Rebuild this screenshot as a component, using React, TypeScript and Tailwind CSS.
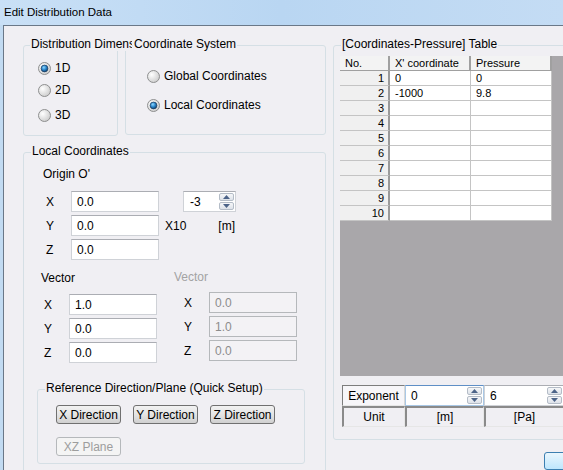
import React, { useId } from "react";

function Radio({ checked }: { checked?: boolean }) {
  const id = useId().replace(/:/g, "");
  return (
    <svg width="13" height="13" viewBox="0 0 13 13" className="shrink-0">
      <defs>
        <radialGradient id={`o${id}`} cx="35%" cy="35%" r="75%">
          <stop offset="0" stopColor="#ffffff" />
          <stop offset="1" stopColor="#c9c9c9" />
        </radialGradient>
        <radialGradient id={`d${id}`} cx="40%" cy="35%" r="70%">
          <stop offset="0" stopColor="#8fd8ff" />
          <stop offset="0.5" stopColor="#2a86cc" />
          <stop offset="1" stopColor="#0b3a68" />
        </radialGradient>
      </defs>
      <circle cx="6.5" cy="6.5" r="6" fill={`url(#o${id})`} stroke="#8e8f8f" strokeWidth="1" />
      {checked && <circle cx="6.5" cy="6.5" r="3.4" fill={`url(#d${id})`} stroke="#1d3c5e" strokeWidth="0.7" />}
    </svg>
  );
}

function Group({
  label,
  className = "",
  labelLeft = "left-[7px]",
  children,
}: {
  label: string;
  className?: string;
  labelLeft?: string;
  children?: React.ReactNode;
}) {
  return (
    <div className={`relative shrink-0 rounded-[3px] border border-[#d5dfe5] ${className}`}>
      <span className={`absolute -top-[9px] ${labelLeft} z-10 whitespace-nowrap overflow-hidden bg-[#f0eff3] px-[1px]`}>{label}</span>
      {children}
    </div>
  );
}

function TextBox({ value, disabled, w = "w-[88px]" }: { value: string; disabled?: boolean; w?: string }) {
  return (
    <div
      className={`${w} h-[21px] shrink-0 flex items-center pl-[5px] border ${
        disabled
          ? "border-[#b5b8bb] bg-[#f3f2f5] text-[#8c8c8c]"
          : "border-[#cfd2d7] border-t-[#abadb3] bg-white text-black"
      }`}
    >
      {value}
    </div>
  );
}

function SpinButtons() {
  return (
    <div className="flex flex-col w-[16px] h-full py-[1px] pr-[1px] gap-[1px] shrink-0">
      <div className="flex-1 flex items-center justify-center border border-[#b4bcc7] rounded-[2px] bg-gradient-to-b from-[#f6f7f9] to-[#dde2e9]">
        <svg width="7" height="4" viewBox="0 0 7 4">
          <path d="M0 4 L3.5 0 L7 4Z" fill="#4c6388" />
        </svg>
      </div>
      <div className="flex-1 flex items-center justify-center border border-[#b4bcc7] rounded-[2px] bg-gradient-to-b from-[#f6f7f9] to-[#dde2e9]">
        <svg width="7" height="4" viewBox="0 0 7 4">
          <path d="M0 0 L3.5 4 L7 0Z" fill="#4c6388" />
        </svg>
      </div>
    </div>
  );
}

function Btn({ children, disabled }: { children: React.ReactNode; disabled?: boolean }) {
  return (
    <div
      className={`w-[65px] h-[19px] shrink-0 flex items-center justify-center rounded-[3px] border whitespace-nowrap ${
        disabled
          ? "border-[#b5b8bb] bg-[#f4f4f4] text-[#9d9d9d]"
          : "border-[#707070] bg-gradient-to-b from-[#f2f2f2] via-[#e4e4e4] to-[#d0d0d0] text-black"
      }`}
    >
      {children}
    </div>
  );
}

const rows: [string, string, string][] = [
  ["1", "0", "0"],
  ["2", "-1000", "9.8"],
  ["3", "", ""],
  ["4", "", ""],
  ["5", "", ""],
  ["6", "", ""],
  ["7", "", ""],
  ["8", "", ""],
  ["9", "", ""],
  ["10", "", ""],
];

function Grid() {
  return (
    <div className="w-[240px] h-[320px] bg-[#a9a7aa] text-[11px] leading-[14px]">
      <div className="flex">
        <div className="w-[50px] h-[15px] pl-[5px] bg-[#f3f3f3] border-r-2 border-b border-r-[#a0a0a0] border-b-[#a0a0a0]">No.</div>
        <div className="w-[81px] h-[15px] pl-[5px] bg-[#f3f3f3] border-r-2 border-b border-r-[#a0a0a0] border-b-[#a0a0a0]">X' coordinate</div>
        <div className="w-[81px] h-[15px] pl-[5px] bg-[#f3f3f3] border-r-2 border-b border-r-[#a0a0a0] border-b-[#a0a0a0]">Pressure</div>
      </div>
      {rows.map((r) => (
        <div key={r[0]} className="flex">
          <div className="w-[50px] h-[15px] pr-[4px] text-right bg-[#f0f0f0] border-r-2 border-b border-r-[#9a9a9a] border-b-[#c4c4c4]">{r[0]}</div>
          <div className="w-[81px] h-[15px] pl-[5px] bg-white border-r border-b border-[#c4c4c4]">{r[1]}</div>
          <div className="w-[81px] h-[15px] pl-[5px] bg-white border-r border-b border-[#c4c4c4]">{r[2]}</div>
        </div>
      ))}
    </div>
  );
}

export default function App() {
  return (
    <div className="relative w-[563px] h-[470px] overflow-hidden bg-[#c2dbf2] font-['Liberation_Sans',Arial,sans-serif] text-[12px] leading-[14px] text-black select-none">
      <div className="h-[25px] flex items-center pl-[4px] pb-[2px] text-[11.5px] bg-gradient-to-r from-[#c9e0f6] via-[#b9d6f2] to-[#c4dcf4]">
        Edit Distribution Data
      </div>
      <div className="flex h-[445px] ml-[3px] overflow-hidden border-l border-t border-[#6a7888] bg-[#f0eff3]">
        {/* left column */}
        <div className="w-[322px] shrink-0 pl-[19px] pt-[19px]">
          <div className="flex gap-[7px]">
            <Group label="Distribution Dimension" className="w-[95px] h-[91px]" labelLeft="left-[6px] w-[102px]">
              <div className="flex flex-col pl-[14px] pt-[15px]">
                <div className="flex items-center gap-[4px] h-[14px]">
                  <Radio checked />
                  <span>1D</span>
                </div>
                <div className="flex items-center gap-[4px] h-[14px] mt-[8px]">
                  <Radio />
                  <span>2D</span>
                </div>
                <div className="flex items-center gap-[4px] h-[14px] mt-[11px]">
                  <Radio />
                  <span>3D</span>
                </div>
              </div>
            </Group>
            <Group label="Coordinate System" className="w-[201px] h-[90px]" labelLeft="left-[7px]">
              <div className="flex flex-col pl-[21px] pt-[23px]">
                <div className="flex items-center gap-[4px] h-[14px]">
                  <Radio />
                  <span>Global Coordinates</span>
                </div>
                <div className="flex items-center gap-[4px] h-[14px] mt-[15px]">
                  <Radio checked />
                  <span>Local Coordinates</span>
                </div>
              </div>
            </Group>
          </div>

          <Group label="Local Coordinates" className="mt-[16px] w-[303px] h-[330px]" labelLeft="left-[7px]">
            <div className="pl-[19px] pt-[14px]">Origin O'</div>
            <div className="mt-[10px] flex flex-col gap-[3px] pl-[22px]">
              <div className="flex items-center">
                <span className="w-[25px]">X</span>
                <TextBox value="0.0" />
                <div className="ml-[24px] w-[53px] h-[21px] flex border border-[#cfd2d7] border-t-[#abadb3] bg-white">
                  <div className="flex-1 flex items-center pl-[6px]">-3</div>
                  <SpinButtons />
                </div>
              </div>
              <div className="flex items-center">
                <span className="w-[25px]">Y</span>
                <TextBox value="0.0" />
                <span className="ml-[6px]">X10</span>
                <span className="ml-[32px]">[m]</span>
              </div>
              <div className="flex items-center">
                <span className="w-[25px]">Z</span>
                <TextBox value="0.0" />
              </div>
            </div>

            <div className="mt-[11px] flex">
              <div className="w-[150px] pl-[17px]">
                <div>Vector</div>
                <div className="mt-[9px] flex flex-col gap-[3px] pl-[3px]">
                  <div className="flex items-center">
                    <span className="w-[25px]">X</span>
                    <TextBox value="1.0" />
                  </div>
                  <div className="flex items-center">
                    <span className="w-[25px]">Y</span>
                    <TextBox value="0.0" />
                  </div>
                  <div className="flex items-center">
                    <span className="w-[25px]">Z</span>
                    <TextBox value="0.0" />
                  </div>
                </div>
              </div>
              <div className="-mt-[1px]">
                <div className="text-[#a3a3a3]">Vector</div>
                <div className="mt-[8px] flex flex-col gap-[3px] pl-[10px]">
                  <div className="flex items-center">
                    <span className="w-[25px]">X</span>
                    <TextBox value="0.0" disabled />
                  </div>
                  <div className="flex items-center">
                    <span className="w-[25px]">Y</span>
                    <TextBox value="1.0" disabled />
                  </div>
                  <div className="flex items-center">
                    <span className="w-[25px]">Z</span>
                    <TextBox value="0.0" disabled />
                  </div>
                </div>
              </div>
            </div>

            <Group label="Reference Direction/Plane (Quick Setup)" className="mt-[26px] ml-[13px] w-[268px] h-[75px]" labelLeft="left-[7px]">
              <div className="pl-[18px] pt-[15px]">
                <div className="flex gap-[12px]">
                  <Btn>X Direction</Btn>
                  <Btn>Y Direction</Btn>
                  <Btn>Z Direction</Btn>
                </div>
                <div className="mt-[13px]">
                  <Btn disabled>XZ Plane</Btn>
                </div>
              </div>
            </Group>
          </Group>
        </div>

        {/* right column */}
        <div className="ml-[7px] pt-[19px] flex flex-col shrink-0">
          <Group label="[Coordinates-Pressure] Table" className="w-[260px] h-[395px]" labelLeft="left-[7px]">
            <div className="pl-[6px] pt-[10px]">
              <Grid />
            </div>
            <div className="pl-[8px] mt-[9px]">
              <div className="flex h-[21px]">
                <div className="w-[63px] flex items-center justify-center border-t border-l border-b border-r border-t-[#7d7d7d] border-l-[#7d7d7d] border-b-[#e6e6e6] border-r-[#d8d8d8] bg-[#f7f6f9]">
                  Exponent
                </div>
                <div className="w-[79px] flex border border-[#a9c8e6] border-t-[#5f8fc6] bg-white">
                  <div className="flex-1 flex items-center pl-[5px]">0</div>
                  <SpinButtons />
                </div>
                <div className="w-[80px] flex border border-[#cfd2d7] border-t-[#abadb3] bg-white">
                  <div className="flex-1 flex items-center pl-[5px]">6</div>
                  <SpinButtons />
                </div>
              </div>
              <div className="flex h-[21px]">
                <div className="w-[63px] flex items-center justify-center border-t-2 border-l-2 border-b border-r border-t-[#8a8a8a] border-l-[#8a8a8a] border-b-[#e6e6e6] border-r-[#e6e6e6]">
                  Unit
                </div>
                <div className="w-[79px] flex items-center justify-center border-t-2 border-l-2 border-b border-r border-t-[#8a8a8a] border-l-[#8a8a8a] border-b-[#e6e6e6] border-r-[#e6e6e6]">
                  [m]
                </div>
                <div className="w-[80px] flex items-center justify-center border-t-2 border-l-2 border-b border-r border-t-[#8a8a8a] border-l-[#8a8a8a] border-b-[#e6e6e6] border-r-[#e6e6e6]">
                  [Pa]
                </div>
              </div>
            </div>
          </Group>
          <div className="ml-[211px] mt-[12px] w-[75px] h-[23px] rounded-[3px] border border-[#3c7fb1] bg-gradient-to-b from-[#eaf6fd] to-[#bee6fd]" />
        </div>
      </div>
    </div>
  );
}
